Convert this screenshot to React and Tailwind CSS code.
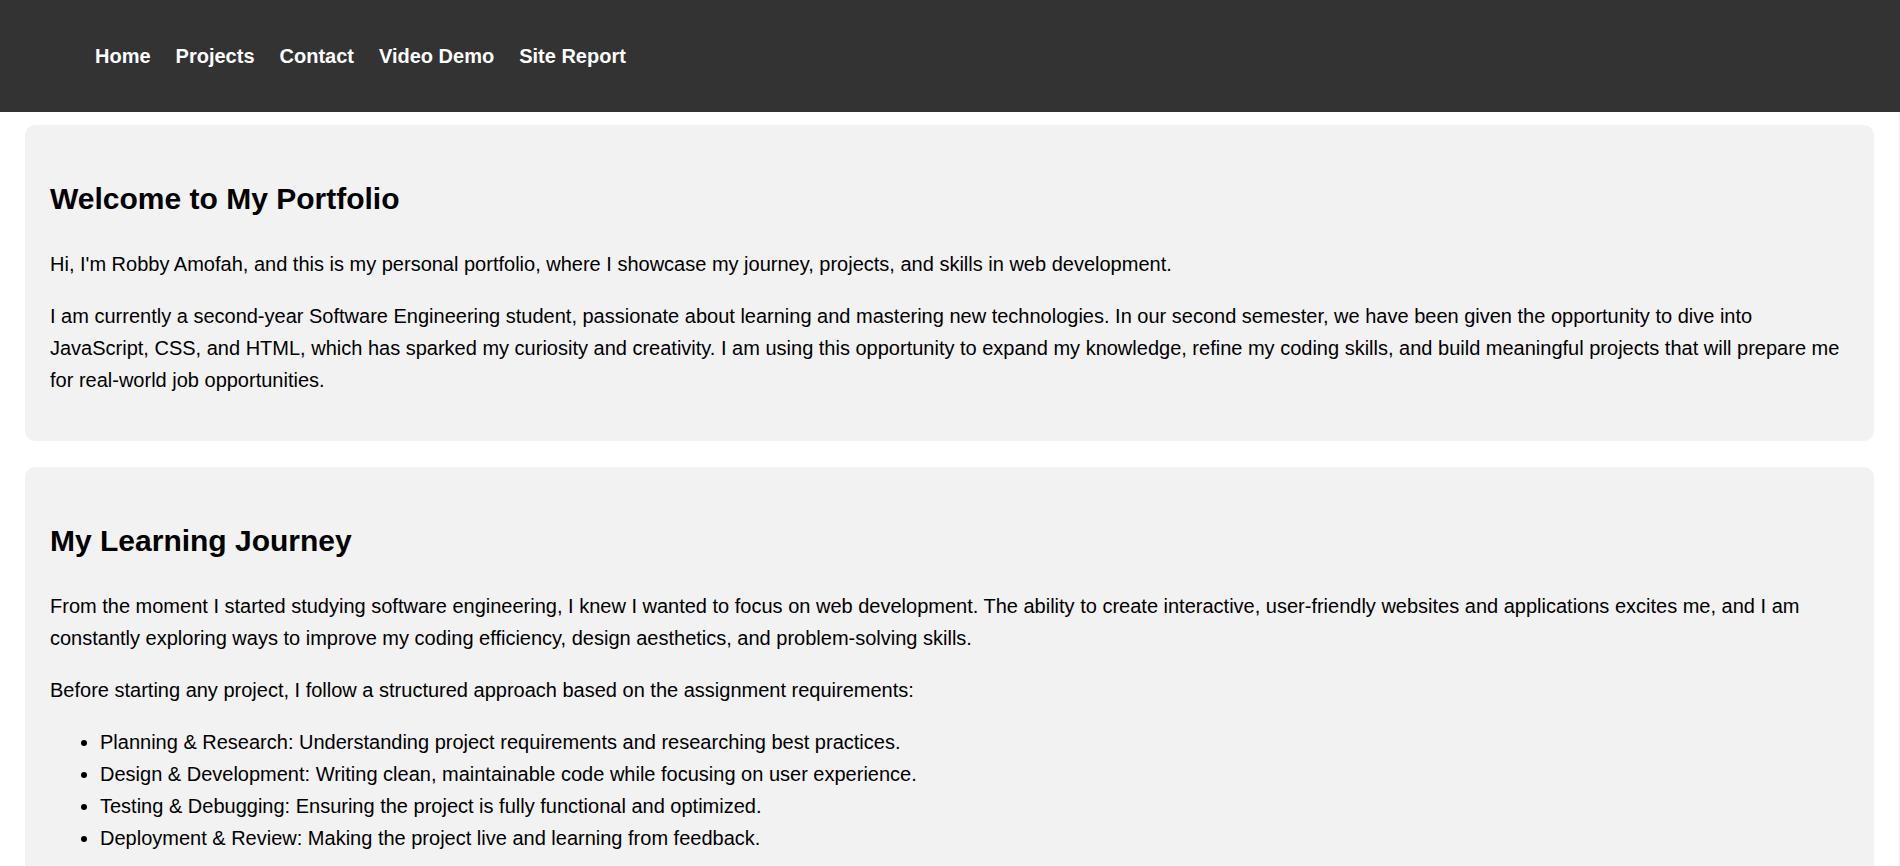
import React from 'react';

const navLinks = ['Home', 'Projects', 'Contact', 'Video Demo', 'Site Report'];

const steps = [
  'Planning & Research: Understanding project requirements and researching best practices.',
  'Design & Development: Writing clean, maintainable code while focusing on user experience.',
  'Testing & Debugging: Ensuring the project is fully functional and optimized.',
  'Deployment & Review: Making the project live and learning from feedback.',
];

const Section = ({ title, children }) => (
  <section className="bg-[#f2f2f2] rounded-[10px] px-[25px] pt-[57px] pb-[25px]">
    <h2 className="text-[30px] font-bold leading-[34px] mb-[32px]">{title}</h2>
    {children}
  </section>
);

const App = () => {
  return (
    <div className="min-h-screen bg-white text-black font-['Liberation_Sans',Arial,sans-serif]">
      <header className="bg-[#333333] h-[112px] flex items-center">
        <nav className="pl-[95px]">
          <ul className="flex gap-[25px]">
            {navLinks.map((link) => (
              <li key={link}>
                <a href="#" className="text-white text-[20px] font-bold">
                  {link}
                </a>
              </li>
            ))}
          </ul>
        </nav>
      </header>

      <main className="w-[1900px] border-r border-[#ececec] px-[25px] pt-[13px] pb-[25px] flex flex-col gap-[26px] text-[20px] leading-[32px]">
        <Section title="Welcome to My Portfolio">
          <p className="mb-[20px]">
            Hi, I'm Robby Amofah, and this is my personal portfolio, where I showcase my journey, projects, and skills in web development.
          </p>
          <p className="mb-[20px]">
            I am currently a second-year Software Engineering student, passionate about learning and mastering new technologies. In our second semester, we have been given the opportunity to dive into JavaScript, CSS, and HTML, which has sparked my curiosity and creativity. I am using this opportunity to expand my knowledge, refine my coding skills, and build meaningful projects that will prepare me for real-world job opportunities.
          </p>
        </Section>

        <Section title="My Learning Journey">
          <p className="mb-[20px]">
            From the moment I started studying software engineering, I knew I wanted to focus on web development. The ability to create interactive, user-friendly websites and applications excites me, and I am constantly exploring ways to improve my coding efficiency, design aesthetics, and problem-solving skills.
          </p>
          <p className="mb-[20px]">
            Before starting any project, I follow a structured approach based on the assignment requirements:
          </p>
          <ul className="list-disc pl-[50px] mb-[20px]">
            {steps.map((step) => (
              <li key={step}>{step}</li>
            ))}
          </ul>
        </Section>
      </main>
    </div>
  );
};

export default App;
